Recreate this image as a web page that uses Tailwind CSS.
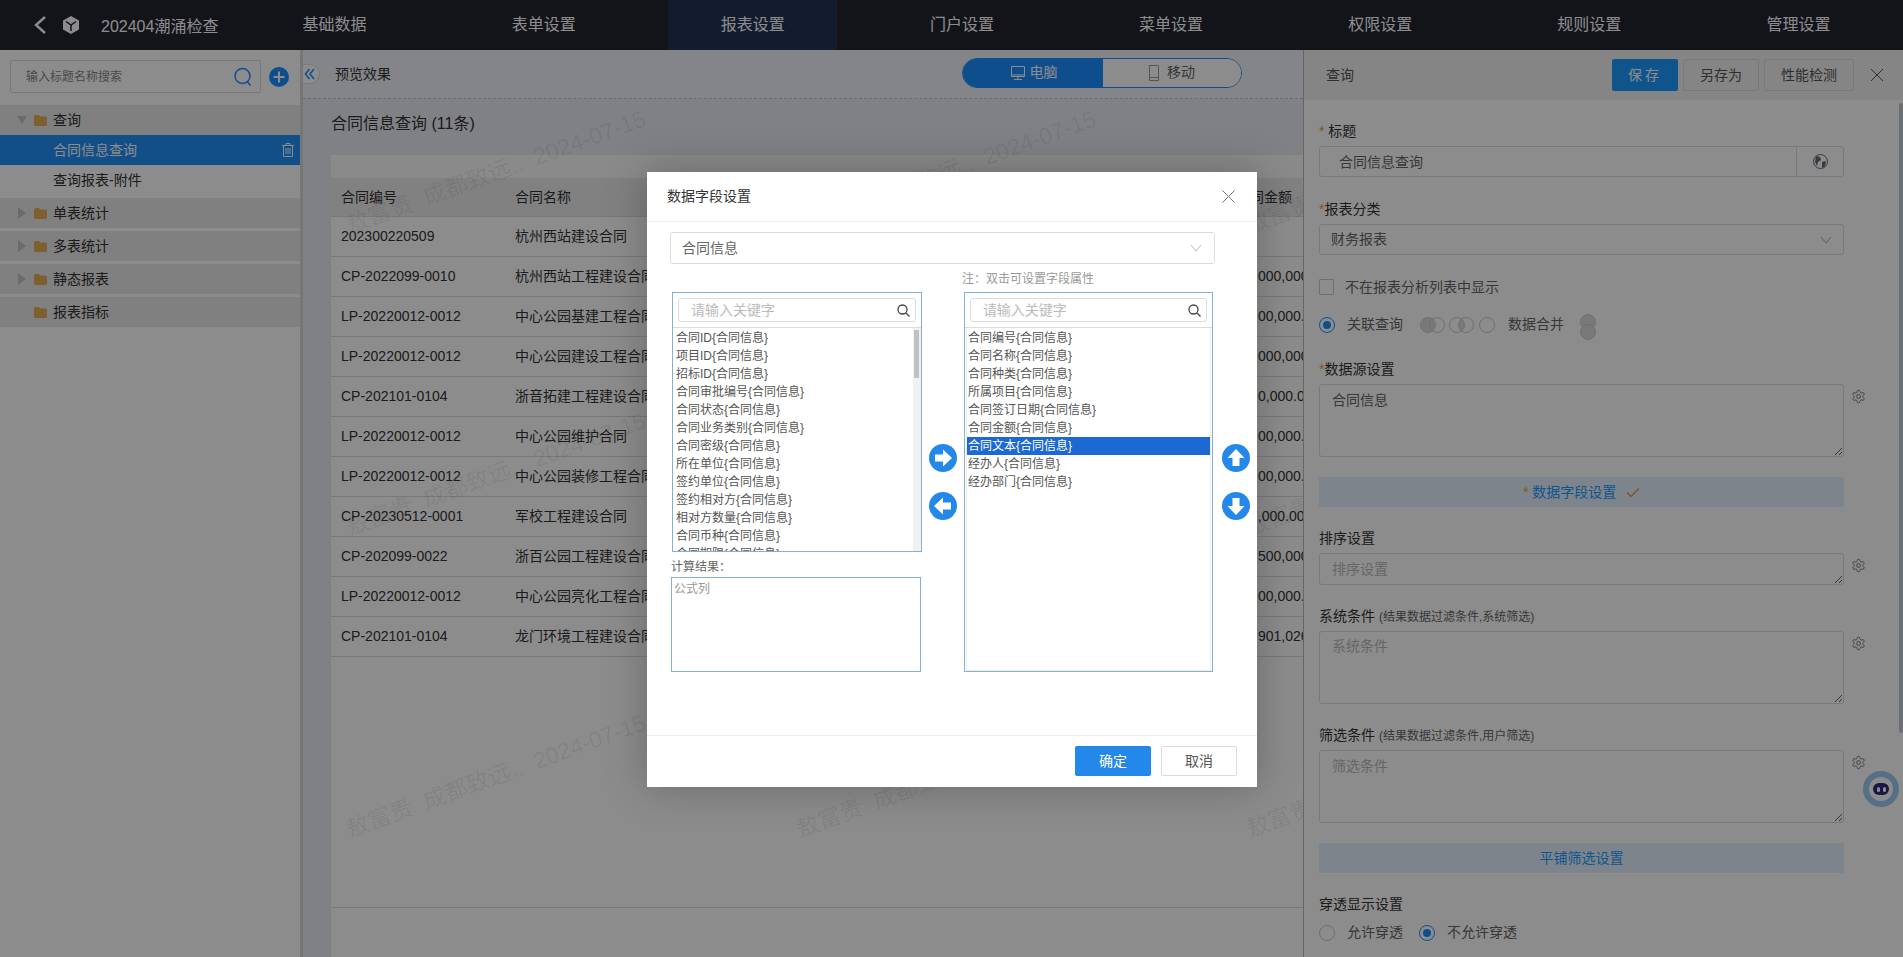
<!DOCTYPE html>
<html lang="zh">
<head>
  <meta charset="UTF-8">
  <script src="https://cdn.jsdelivr.net/npm/@tailwindcss/browser@4"></script>
  <title>报表设置</title>
</head>
<body class="relative w-[1903px] h-[957px] overflow-hidden bg-white text-[14px] text-[#333] font-['Liberation_Sans','Noto_Sans_CJK_SC',sans-serif]">

<!-- Header -->
<div class="h-[50px] flex bg-[#232431] text-white">
  <div class="w-[230px] flex items-center">
    <svg class="ml-[33px] w-[14px] h-[20px]" viewBox="0 0 14 20" fill="none" stroke="#fff" stroke-width="2.4"><path d="M12 2 3 10l9 8"/></svg>
    <svg class="ml-[15px] w-[18px] h-[20px]" viewBox="0 0 18 20"><path d="M9 1 17 5.5v9L9 19 1 14.5v-9z" fill="#fff"/><path d="M4 6.5 9 10l5-3.5M9 10v6" fill="none" stroke="#232431" stroke-width="1.5"/></svg>
    <span class="ml-[21px] text-[16px] mt-[3px] whitespace-nowrap">202404潮涌检查</span>
  </div>
  <nav class="flex-1 grid grid-cols-8 text-[16px] text-center">
    <a class="leading-[50px]">基础数据</a>
    <a class="leading-[50px]">表单设置</a>
    <a class="mx-[20px] leading-[50px] bg-[#233356] border-b-[6px] border-[#1c9cff]">报表设置</a>
    <a class="leading-[50px]">门户设置</a>
    <a class="leading-[50px]">菜单设置</a>
    <a class="leading-[50px]">权限设置</a>
    <a class="leading-[50px]">规则设置</a>
    <a class="leading-[50px]">管理设置</a>
  </nav>
</div>

<div class="h-[907px] flex">

  <!-- Sidebar -->
  <aside class="w-[303px] shrink-0 border-r-[3px] border-[#d8d8d8] bg-white">
    <div class="h-[55px] pl-[10px] pt-[10px] flex items-start">
      <div class="w-[251px] h-[33px] border border-[#ddd] rounded-[2px] flex items-center justify-between pl-[15px] pr-[7px] text-[12px] text-[#888]">
        输入标题名称搜索
        <svg class="w-[20px] h-[20px]" viewBox="0 0 20 20" fill="none" stroke="#1c8fff" stroke-width="1.5"><circle cx="9.5" cy="9" r="7.5"/><path d="m14.5 15 3 3.5"/></svg>
      </div>
      <svg class="ml-[8px] mt-[7px] w-[20px] h-[20px]" viewBox="0 0 20 20"><circle cx="10" cy="10" r="10" fill="#1c8fff"/><path d="M10 4.5v11M4.5 10h11" stroke="#fff" stroke-width="2"/></svg>
    </div>
    <div class="h-[30px] bg-[#e9e9e9] flex items-center">
      <svg class="ml-[17px] w-[10px] h-[8px]" viewBox="0 0 10 8"><path d="M0 0h10L5 8z" fill="#c4c4c4"/></svg>
      <svg class="ml-[7px] w-[13px] h-[11px]" viewBox="0 0 13 11"><path d="M0 1.5q0-1.500 1.500-1.500H5l1 1.500h5.500q1.500 0 1.500 1.500v6.500q0 1.500-1.500 1.500h-10Q0 11 0 9.500z" fill="#e8ae58"/></svg>
      <span class="ml-[6px]">查询</span>
    </div>
    <div class="h-[30px] bg-[#2190f8] text-white flex items-center justify-between pl-[53px] pr-[6px]">
      合同信息查询
      <svg class="w-[12px] h-[14px]" viewBox="0 0 12 14" fill="none" stroke="#fff"><path d="M0 2.5h12M4 2.5V.5h4v2M1.5 2.5v11h9v-11M4 5v6M6 5v6M8 5v6"/></svg>
    </div>
    <div class="h-[30px] pl-[53px] flex items-center">查询报表-附件</div>
    <div class="mt-[3px] h-[30px] bg-[#e9e9e9] flex items-center">
      <svg class="ml-[18px] w-[8px] h-[12px]" viewBox="0 0 8 12"><path d="M0 0v12l8-6z" fill="#c4c4c4"/></svg>
      <svg class="ml-[8px] w-[13px] h-[11px]" viewBox="0 0 13 11"><path d="M0 1.5q0-1.500 1.500-1.500H5l1 1.500h5.500q1.500 0 1.500 1.500v6.500q0 1.500-1.500 1.500h-10Q0 11 0 9.500z" fill="#e8ae58"/></svg>
      <span class="ml-[6px]">单表统计</span>
    </div>
    <div class="mt-[3px] h-[30px] bg-[#e9e9e9] flex items-center">
      <svg class="ml-[18px] w-[8px] h-[12px]" viewBox="0 0 8 12"><path d="M0 0v12l8-6z" fill="#c4c4c4"/></svg>
      <svg class="ml-[8px] w-[13px] h-[11px]" viewBox="0 0 13 11"><path d="M0 1.5q0-1.500 1.500-1.500H5l1 1.500h5.500q1.500 0 1.500 1.500v6.500q0 1.500-1.500 1.500h-10Q0 11 0 9.500z" fill="#e8ae58"/></svg>
      <span class="ml-[6px]">多表统计</span>
    </div>
    <div class="mt-[3px] h-[30px] bg-[#e9e9e9] flex items-center">
      <svg class="ml-[18px] w-[8px] h-[12px]" viewBox="0 0 8 12"><path d="M0 0v12l8-6z" fill="#c4c4c4"/></svg>
      <svg class="ml-[8px] w-[13px] h-[11px]" viewBox="0 0 13 11"><path d="M0 1.5q0-1.500 1.500-1.500H5l1 1.500h5.500q1.500 0 1.500 1.500v6.500q0 1.500-1.500 1.500h-10Q0 11 0 9.500z" fill="#e8ae58"/></svg>
      <span class="ml-[6px]">静态报表</span>
    </div>
    <div class="mt-[3px] h-[30px] bg-[#e9e9e9] flex items-center">
      <svg class="ml-[34px] w-[13px] h-[11px]" viewBox="0 0 13 11"><path d="M0 1.5q0-1.500 1.500-1.500H5l1 1.500h5.500q1.500 0 1.500 1.500v6.500q0 1.500-1.500 1.500h-10Q0 11 0 9.500z" fill="#e8ae58"/></svg>
      <span class="ml-[6px]">报表指标</span>
    </div>
  </aside>

  <!-- Preview -->
  <main class="relative w-[1000px] shrink-0 overflow-hidden bg-[#e7ecf3]">
    <div class="h-[49px] flex items-center bg-[#f1f3f7] border-b border-dashed border-[#c4c4c4]">
      <div class="w-[20px] h-[20px] -ml-[3px] rounded-r-full bg-white border border-l-0 border-[#ddd] flex items-center justify-center">
        <svg class="w-[12px] h-[12px]" viewBox="0 0 12 12" fill="none" stroke="#1c8fff" stroke-width="1.5"><path d="M5.500 1 1.500 6l4 5M10 1 6 6l4 5"/></svg>
      </div>
      <span class="ml-[15px]">预览效果</span>
      <div class="ml-[571px] mb-[3px] w-[280px] h-[30px] rounded-full overflow-hidden border border-[#1c8fff] flex">
        <div class="w-[140px] bg-[#1c8fff] text-white flex items-center justify-center gap-[5px] pl-[2px]">
          <svg class="w-[14px] h-[16px]" viewBox="0 0 14 16" fill="none" stroke="#fff"><path d="M.5 1.5h13v10H.5zM.5 10h13M7 11.5V14M3 14.5h8"/></svg>
          电脑
        </div>
        <div class="flex-1 bg-white flex items-center justify-center gap-[8px] text-[#666]">
          <svg class="w-[10px] h-[16px]" viewBox="0 0 10 16" fill="none" stroke="#999"><path d="M.5.5h9v15h-9zM.5 12.5h9"/></svg>
          移动
        </div>
      </div>
    </div>
    <h2 class="h-[50px] pl-[28px] flex items-center text-[16px] font-normal">合同信息查询 (11条)</h2>
    <div class="ml-[28px] mt-[6px] h-[802px] bg-white">
      <div class="h-[23px] bg-[#fbfbfb]"></div>
      <div class="h-[39px] flex items-center bg-[#ebebeb] border-b border-[#ddd]">
        <span class="w-[184px] pl-[10px]">合同编号</span><span class="w-[721px]">合同名称</span><span class="w-[67px] whitespace-nowrap overflow-hidden">合同金额</span>
      </div>
      <div class="h-[40px] flex items-center border-b border-[#ddd] whitespace-nowrap"><span class="w-[184px] pl-[10px]">202300220509</span><span class="w-[715px]">杭州西站建设合同</span><span class="w-[73px] pl-[28px] overflow-hidden"></span></div>
      <div class="h-[40px] flex items-center border-b border-[#ddd] whitespace-nowrap"><span class="w-[184px] pl-[10px]">CP-2022099-0010</span><span class="w-[715px]">杭州西站工程建设合同</span><span class="w-[73px] pl-[28px] overflow-hidden">000,000</span></div>
      <div class="h-[40px] flex items-center border-b border-[#ddd] whitespace-nowrap"><span class="w-[184px] pl-[10px]">LP-20220012-0012</span><span class="w-[715px]">中心公园基建工程合同</span><span class="w-[73px] pl-[28px] overflow-hidden">00,000.00</span></div>
      <div class="h-[40px] flex items-center border-b border-[#ddd] whitespace-nowrap"><span class="w-[184px] pl-[10px]">LP-20220012-0012</span><span class="w-[715px]">中心公园建设工程合同</span><span class="w-[73px] pl-[28px] overflow-hidden">000,000</span></div>
      <div class="h-[40px] flex items-center border-b border-[#ddd] whitespace-nowrap"><span class="w-[184px] pl-[10px]">CP-202101-0104</span><span class="w-[715px]">浙音拓建工程建设合同</span><span class="w-[73px] pl-[28px] overflow-hidden">0,000.00</span></div>
      <div class="h-[40px] flex items-center border-b border-[#ddd] whitespace-nowrap"><span class="w-[184px] pl-[10px]">LP-20220012-0012</span><span class="w-[715px]">中心公园维护合同</span><span class="w-[73px] pl-[28px] overflow-hidden">00,000.00</span></div>
      <div class="h-[40px] flex items-center border-b border-[#ddd] whitespace-nowrap"><span class="w-[184px] pl-[10px]">LP-20220012-0012</span><span class="w-[715px]">中心公园装修工程合同</span><span class="w-[73px] pl-[28px] overflow-hidden">00,000.00</span></div>
      <div class="h-[40px] flex items-center border-b border-[#ddd] whitespace-nowrap"><span class="w-[184px] pl-[10px]">CP-20230512-0001</span><span class="w-[715px]">军校工程建设合同</span><span class="w-[73px] pl-[20px] overflow-hidden">7,000.00</span></div>
      <div class="h-[40px] flex items-center border-b border-[#ddd] whitespace-nowrap"><span class="w-[184px] pl-[10px]">CP-202099-0022</span><span class="w-[715px]">浙百公园工程建设合同</span><span class="w-[73px] pl-[28px] overflow-hidden">500,000</span></div>
      <div class="h-[40px] flex items-center border-b border-[#ddd] whitespace-nowrap"><span class="w-[184px] pl-[10px]">LP-20220012-0012</span><span class="w-[715px]">中心公园亮化工程合同</span><span class="w-[73px] pl-[28px] overflow-hidden">00,000.00</span></div>
      <div class="h-[40px] flex items-center border-b border-[#ddd] whitespace-nowrap"><span class="w-[184px] pl-[10px]">CP-202101-0104</span><span class="w-[715px]">龙门环境工程建设合同</span><span class="w-[73px] pl-[28px] overflow-hidden">901,026</span></div>
      <div class="h-[251px] border-b border-[#ddd]"></div>
    </div>

    <!-- Watermarks -->
    <span class="absolute left-[44px] top-[159px] origin-left -rotate-[20deg] whitespace-pre text-[23px] text-black/[0.08] pointer-events-none">敖富贵  成都致远..  2024-07-15</span>
    <span class="absolute left-[494px] top-[159px] origin-left -rotate-[20deg] whitespace-pre text-[23px] text-black/[0.08] pointer-events-none">敖富贵  成都致远..  2024-07-15</span>
    <span class="absolute left-[944px] top-[159px] origin-left -rotate-[20deg] whitespace-pre text-[23px] text-black/[0.08] pointer-events-none">敖富贵  成都致远..  2024-07-15</span>
    <span class="absolute left-[44px] top-[461px] origin-left -rotate-[20deg] whitespace-pre text-[23px] text-black/[0.08] pointer-events-none">敖富贵  成都致远..  2024-07-15</span>
    <span class="absolute left-[494px] top-[461px] origin-left -rotate-[20deg] whitespace-pre text-[23px] text-black/[0.08] pointer-events-none">敖富贵  成都致远..  2024-07-15</span>
    <span class="absolute left-[944px] top-[461px] origin-left -rotate-[20deg] whitespace-pre text-[23px] text-black/[0.08] pointer-events-none">敖富贵  成都致远..  2024-07-15</span>
    <span class="absolute left-[44px] top-[763px] origin-left -rotate-[20deg] whitespace-pre text-[23px] text-black/[0.08] pointer-events-none">敖富贵  成都致远..  2024-07-15</span>
    <span class="absolute left-[494px] top-[763px] origin-left -rotate-[20deg] whitespace-pre text-[23px] text-black/[0.08] pointer-events-none">敖富贵  成都致远..  2024-07-15</span>
    <span class="absolute left-[944px] top-[763px] origin-left -rotate-[20deg] whitespace-pre text-[23px] text-black/[0.08] pointer-events-none">敖富贵  成都致远..  2024-07-15</span>
  </main>

  <!-- Settings panel -->
  <section class="flex-1 border-l border-[#bbb] bg-white relative">
    <div class="h-[50px] bg-[#f3f3f3] flex items-center pl-[22px]">
      <span class="mr-[258px] text-[#555]">查询</span>
      <button class="w-[66px] h-[32px] bg-[#1c9cff] text-white rounded-[2px] tracking-[3px]">保存</button>
      <button class="ml-[5px] w-[76px] h-[32px] border border-[#ddd] rounded-[2px] text-[#555]">另存为</button>
      <button class="ml-[5px] w-[90px] h-[32px] border border-[#ddd] rounded-[2px] text-[#555]">性能检测</button>
      <svg class="ml-[16px] w-[14px] h-[14px]" viewBox="0 0 14 14" stroke="#555"><path d="M1 1l12 12M13 1 1 13"/></svg>
    </div>
    <div class="pl-[15px] pt-[20px]">
      <label class="block h-[22px] leading-[22px]"><span class="text-[#e8a33d]">*</span> 标题</label>
      <div class="mt-[4px] w-[525px] h-[31px] border border-[#ddd] rounded-[3px] flex">
        <span class="flex-1 pl-[19px] leading-[31px] text-[#666]">合同信息查询</span>
        <span class="w-[47px] border-l border-[#ddd] flex items-center justify-center">
          <svg class="w-[15px] h-[15px]" viewBox="0 0 15 15"><circle cx="7.5" cy="7.5" r="7" fill="#fff" stroke="#667"/><path d="M3 2l4 1 1 3-3 2-1 4-2-4zM9 8l4-1-1 5-3 2z" fill="#667"/></svg>
        </span>
      </div>

      <label class="block mt-[21px] h-[22px] leading-[22px]"><span class="text-[#e8a33d]">*</span>报表分类</label>
      <div class="mt-[4px] w-[525px] h-[31px] border border-[#ddd] rounded-[3px] flex items-center justify-between pl-[11px] pr-[11px] text-[#666]">
        财务报表
        <svg class="w-[12px] h-[8px]" viewBox="0 0 12 8" fill="none" stroke="#aaa"><path d="m1 1 5 6 5-6"/></svg>
      </div>

      <div class="mt-[24px] h-[16px] flex items-center text-[#666]">
        <span class="w-[15px] h-[16px] border border-[#ccc] rounded-[1px]"></span>
        <span class="ml-[11px]">不在报表分析列表中显示</span>
      </div>

      <div class="mt-[22px] h-[16px] flex items-center text-[#666]">
        <span class="w-[16px] h-[16px] rounded-full border border-[#1c8fff] flex items-center justify-center"><span class="w-[8px] h-[8px] rounded-full bg-[#1c8fff]"></span></span>
        <span class="ml-[12px] -mt-[2px]">关联查询</span>
        <svg class="ml-[17px] w-[76px] h-[18px]" viewBox="0 0 76 18" fill="none" stroke="#ccc"><circle cx="8" cy="9" r="7.5" fill="#ddd"/><circle cx="17" cy="9" r="7.5"/><path d="M41.5 3a7.5 7.500 0 0 1 0 12 7.500 7.500 0 0 1 0-12z" fill="#ddd" stroke="none"/><circle cx="37" cy="9" r="7.5"/><circle cx="46" cy="9" r="7.5"/><circle cx="67" cy="9" r="7.5"/></svg>
        <span class="ml-[12px] -mt-[2px]">数据合并</span>
        <svg class="ml-[16px] w-[16px] h-[28px] mt-[4px]" viewBox="0 0 16 28" fill="#ddd" stroke="#ccc"><circle cx="8" cy="9" r="7.5"/><circle cx="8" cy="19" r="7.5"/></svg>
      </div>

      <label class="block mt-[25px] h-[22px] leading-[22px]"><span class="text-[#e8a33d]">*</span>数据源设置</label>
      <div class="mt-[4px] flex items-start">
        <textarea class="w-[525px] h-[73px] border border-[#ddd] rounded-[3px] px-[12px] pt-[5px] leading-[20px] text-[#666] block" readonly>合同信息</textarea>
        <svg class="ml-[7px] mt-[5px] w-[15px] h-[15px]" viewBox="0 0 24 24" fill="none" stroke="#777" stroke-width="1.6"><path d="M12.22 2h-.44a2 2 0 0 0-2 2v.18a2 2 0 0 1-1 1.73l-.43.25a2 2 0 0 1-2 0l-.15-.08a2 2 0 0 0-2.73.73l-.22.38a2 2 0 0 0 .73 2.73l.15.1a2 2 0 0 1 1 1.72v.51a2 2 0 0 1-1 1.74l-.15.09a2 2 0 0 0-.73 2.73l.22.38a2 2 0 0 0 2.73.73l.15-.08a2 2 0 0 1 2 0l.43.25a2 2 0 0 1 1 1.73V20a2 2 0 0 0 2 2h.44a2 2 0 0 0 2-2v-.18a2 2 0 0 1 1-1.73l.43-.25a2 2 0 0 1 2 0l.15.08a2 2 0 0 0 2.73-.73l.22-.39a2 2 0 0 0-.73-2.73l-.15-.08a2 2 0 0 1-1-1.74v-.5a2 2 0 0 1 1-1.74l.15-.09a2 2 0 0 0 .73-2.73l-.22-.38a2 2 0 0 0-2.73-.73l-.15.08a2 2 0 0 1-2 0l-.43-.25a2 2 0 0 1-1-1.73V4a2 2 0 0 0-2-2z"/><circle cx="12" cy="12" r="3"/></svg>
      </div>

      <button class="block mt-[20px] w-[525px] h-[30px] bg-[#e5f1fd] text-[#1c9cff] text-center">
        <span class="text-[#e8a33d]">*</span> 数据字段设置
        <svg class="inline ml-[6px] w-[14px] h-[10px]" viewBox="0 0 14 10" fill="none" stroke="#e8a33d" stroke-width="1.5"><path d="m1 4.500 4 4 8-8"/></svg>
      </button>

      <label class="block mt-[20px] h-[22px] leading-[22px]">排序设置</label>
      <div class="mt-[4px] flex items-start">
        <textarea class="w-[525px] h-[32px] border border-[#ddd] rounded-[3px] px-[12px] pt-[5px] leading-[20px] placeholder-[#bbb] block" placeholder="排序设置"></textarea>
        <svg class="ml-[7px] mt-[5px] w-[15px] h-[15px]" viewBox="0 0 24 24" fill="none" stroke="#777" stroke-width="1.6"><path d="M12.22 2h-.44a2 2 0 0 0-2 2v.18a2 2 0 0 1-1 1.73l-.43.25a2 2 0 0 1-2 0l-.15-.08a2 2 0 0 0-2.73.73l-.22.38a2 2 0 0 0 .73 2.73l.15.1a2 2 0 0 1 1 1.72v.51a2 2 0 0 1-1 1.74l-.15.09a2 2 0 0 0-.73 2.73l.22.38a2 2 0 0 0 2.73.73l.15-.08a2 2 0 0 1 2 0l.43.25a2 2 0 0 1 1 1.73V20a2 2 0 0 0 2 2h.44a2 2 0 0 0 2-2v-.18a2 2 0 0 1 1-1.73l.43-.25a2 2 0 0 1 2 0l.15.08a2 2 0 0 0 2.73-.73l.22-.39a2 2 0 0 0-.73-2.73l-.15-.08a2 2 0 0 1-1-1.74v-.5a2 2 0 0 1 1-1.74l.15-.09a2 2 0 0 0 .73-2.73l-.22-.38a2 2 0 0 0-2.73-.73l-.15.08a2 2 0 0 1-2 0l-.43-.25a2 2 0 0 1-1-1.73V4a2 2 0 0 0-2-2z"/><circle cx="12" cy="12" r="3"/></svg>
      </div>

      <label class="block mt-[20px] h-[22px] leading-[22px]">系统条件 <span class="text-[12px] text-[#666]">(结果数据过滤条件,系统筛选)</span></label>
      <div class="mt-[4px] flex items-start">
        <textarea class="w-[525px] h-[73px] border border-[#ddd] rounded-[3px] px-[12px] pt-[4px] leading-[20px] placeholder-[#bbb] block" placeholder="系统条件"></textarea>
        <svg class="ml-[7px] mt-[5px] w-[15px] h-[15px]" viewBox="0 0 24 24" fill="none" stroke="#777" stroke-width="1.6"><path d="M12.22 2h-.44a2 2 0 0 0-2 2v.18a2 2 0 0 1-1 1.73l-.43.25a2 2 0 0 1-2 0l-.15-.08a2 2 0 0 0-2.73.73l-.22.38a2 2 0 0 0 .73 2.73l.15.1a2 2 0 0 1 1 1.72v.51a2 2 0 0 1-1 1.74l-.15.09a2 2 0 0 0-.73 2.73l.22.38a2 2 0 0 0 2.73.73l.15-.08a2 2 0 0 1 2 0l.43.25a2 2 0 0 1 1 1.73V20a2 2 0 0 0 2 2h.44a2 2 0 0 0 2-2v-.18a2 2 0 0 1 1-1.73l.43-.25a2 2 0 0 1 2 0l.15.08a2 2 0 0 0 2.73-.73l.22-.39a2 2 0 0 0-.73-2.73l-.15-.08a2 2 0 0 1-1-1.74v-.5a2 2 0 0 1 1-1.74l.15-.09a2 2 0 0 0 .73-2.73l-.22-.38a2 2 0 0 0-2.73-.73l-.15.08a2 2 0 0 1-2 0l-.43-.25a2 2 0 0 1-1-1.73V4a2 2 0 0 0-2-2z"/><circle cx="12" cy="12" r="3"/></svg>
      </div>

      <label class="block mt-[20px] h-[22px] leading-[22px]">筛选条件 <span class="text-[12px] text-[#666]">(结果数据过滤条件,用户筛选)</span></label>
      <div class="mt-[4px] flex items-start">
        <textarea class="w-[525px] h-[73px] border border-[#ddd] rounded-[3px] px-[12px] pt-[5px] leading-[20px] placeholder-[#bbb] block" placeholder="筛选条件"></textarea>
        <svg class="ml-[7px] mt-[5px] w-[15px] h-[15px]" viewBox="0 0 24 24" fill="none" stroke="#777" stroke-width="1.6"><path d="M12.22 2h-.44a2 2 0 0 0-2 2v.18a2 2 0 0 1-1 1.73l-.43.25a2 2 0 0 1-2 0l-.15-.08a2 2 0 0 0-2.73.73l-.22.38a2 2 0 0 0 .73 2.73l.15.1a2 2 0 0 1 1 1.72v.51a2 2 0 0 1-1 1.74l-.15.09a2 2 0 0 0-.73 2.73l.22.38a2 2 0 0 0 2.73.73l.15-.08a2 2 0 0 1 2 0l.43.25a2 2 0 0 1 1 1.73V20a2 2 0 0 0 2 2h.44a2 2 0 0 0 2-2v-.18a2 2 0 0 1 1-1.73l.43-.25a2 2 0 0 1 2 0l.15.08a2 2 0 0 0 2.73-.73l.22-.39a2 2 0 0 0-.73-2.73l-.15-.08a2 2 0 0 1-1-1.74v-.5a2 2 0 0 1 1-1.74l.15-.09a2 2 0 0 0 .73-2.73l-.22-.38a2 2 0 0 0-2.73-.73l-.15.08a2 2 0 0 1-2 0l-.43-.25a2 2 0 0 1-1-1.73V4a2 2 0 0 0-2-2z"/><circle cx="12" cy="12" r="3"/></svg>
      </div>

      <button class="block mt-[20px] w-[525px] h-[30px] bg-[#e5f1fd] text-[#1c9cff] text-center">平铺筛选设置</button>

      <label class="block mt-[20px] h-[22px] leading-[22px]">穿透显示设置</label>
      <div class="mt-[10px] h-[16px] flex items-center text-[#666]">
        <span class="w-[16px] h-[16px] rounded-full border border-[#ccc]"></span>
        <span class="ml-[12px] -mt-[2px]">允许穿透</span>
        <span class="ml-[16px] w-[16px] h-[16px] rounded-full border border-[#1c8fff] flex items-center justify-center"><span class="w-[8px] h-[8px] rounded-full bg-[#1c8fff]"></span></span>
        <span class="ml-[12px] -mt-[2px]">不允许穿透</span>
      </div>
    </div>
    <!-- scrollbar -->
    <div class="absolute right-0 top-[53px] w-[4px] h-[630px] bg-[#c4c8d0] rounded-full"></div>
    <!-- bot -->
    <div class="absolute right-0 top-[715px] w-[47px] h-[48px] bg-white/70 rounded-l-[24px] flex items-center justify-end pr-[4px]">
      <div class="w-[36px] h-[36px] rounded-full bg-[#9ccbf5] flex items-center justify-center">
        <div class="w-[24px] h-[24px] rounded-full bg-white flex items-center justify-center">
          <div class="w-[16px] h-[12px] rounded-[6px] bg-[#2c2c80] flex items-center justify-center gap-[3px]"><span class="w-[3px] h-[5px] bg-white rounded-full"></span><span class="w-[3px] h-[5px] bg-white rounded-full"></span></div>
        </div>
      </div>
    </div>
  </section>
</div>

<!-- Dim layer -->
<div class="absolute inset-0 bg-black/45"></div>

<!-- Modal -->
<div class="absolute left-[647px] top-[172px] w-[610px] h-[615px] bg-white shadow-[0_0_40px_rgba(0,0,0,0.25)] flex flex-col">
  <div class="h-[50px] shrink-0 border-b border-[#eee] flex items-center justify-between pl-[20px] pr-[22px] text-[#333]">
    数据字段设置
    <svg class="w-[13px] h-[13px]" viewBox="0 0 13 13" stroke="#777"><path d="M.5.5l12 12M12.5.5l-12 12"/></svg>
  </div>
  <div class="flex-1 relative">
    <div class="ml-[23px] mt-[10px] w-[545px] h-[32px] border border-[#ddd] rounded-[3px] flex items-center justify-between pl-[11px] pr-[12px] text-[#666]">
      合同信息
      <svg class="w-[12px] h-[8px]" viewBox="0 0 12 8" fill="none" stroke="#bbb"><path d="m1 1 5 6 5-6"/></svg>
    </div>
    <div class="h-[28px] pl-[315px] pt-[7px] text-[12px] leading-[16px] text-[#999]">注：双击可设置字段属性</div>
    <div class="flex items-start">
      <!-- Left column -->
      <div class="ml-[24px] w-[251px]">
        <div class="ml-[1px] w-[250px] h-[260px] border border-[#85b0d0] flex flex-col">
          <div class="h-[35px] shrink-0 border-b border-[#ddd] pl-[5px] pr-[5px] pt-[5px]">
            <div class="h-[24px] border border-[#ddd] rounded-[3px] flex items-center justify-between pl-[12px] pr-[5px] text-[#bbb]">
              请输入关键字
              <svg class="w-[13px] h-[13px]" viewBox="0 0 13 13" fill="none" stroke="#444" stroke-width="1.3"><circle cx="5.5" cy="5.5" r="4.5"/><path d="m9 9 3.500 3.500"/></svg>
            </div>
          </div>
          <div class="flex-1 flex overflow-hidden">
            <ul class="flex-1 pl-[3px] pt-[1px] text-[12px] leading-[18px] text-[#555] overflow-hidden whitespace-nowrap">
              <li>合同ID{合同信息}</li><li>项目ID{合同信息}</li><li>招标ID{合同信息}</li><li>合同审批编号{合同信息}</li><li>合同状态{合同信息}</li><li>合同业务类别{合同信息}</li><li>合同密级{合同信息}</li><li>所在单位{合同信息}</li><li>签约单位{合同信息}</li><li>签约相对方{合同信息}</li><li>相对方数量{合同信息}</li><li>合同币种{合同信息}</li><li>合同期限{合同信息}</li>
            </ul>
            <div class="w-[8px] bg-[#f1f1f1] pt-[2px]"><div class="w-[5px] ml-[1px] h-[48px] bg-[#c1c1c1]"></div></div>
          </div>
        </div>
        <div class="h-[25px] pt-[3px] leading-[25px] text-[12px] text-[#666]">计算结果：</div>
        <textarea class="block w-[250px] h-[95px] border border-[#85b0d0] px-[2px] py-[2px] text-[12px] leading-[18px] placeholder-[#999] resize-none" placeholder="公式列"></textarea>
      </div>
      <!-- Move buttons -->
      <div class="w-[42px] pt-[152px] pl-[1px] flex flex-col items-center gap-[20px]">
        <svg class="w-[28px] h-[28px]" viewBox="0 0 28 28"><circle cx="14" cy="14" r="14" fill="#2488ea"/><path d="M6 10.500h8V5.500L23 14l-9 8.500v-5H6z" fill="#fff"/></svg>
        <svg class="w-[28px] h-[28px]" viewBox="0 0 28 28"><circle cx="14" cy="14" r="14" fill="#2488ea"/><path d="M22 10.500h-8V5.500L5 14l9 8.500v-5h8z" fill="#fff"/></svg>
      </div>
      <!-- Right column -->
      <div class="w-[250px] h-[380px] border border-[#85b0d0] flex flex-col">
        <div class="h-[35px] shrink-0 border-b border-[#ddd] pl-[5px] pr-[5px] pt-[5px]">
          <div class="h-[24px] border border-[#ddd] rounded-[3px] flex items-center justify-between pl-[12px] pr-[5px] text-[#bbb]">
            请输入关键字
            <svg class="w-[13px] h-[13px]" viewBox="0 0 13 13" fill="none" stroke="#444" stroke-width="1.3"><circle cx="5.5" cy="5.5" r="4.5"/><path d="m9 9 3.500 3.500"/></svg>
          </div>
        </div>
        <ul class="flex-1 mx-[1px] pt-[1px] text-[12px] leading-[18px] text-[#555] whitespace-nowrap border-x border-[#eee] border-b">
          <li class="pl-[1px]">合同编号{合同信息}</li><li class="pl-[1px]">合同名称{合同信息}</li><li class="pl-[1px]">合同种类{合同信息}</li><li class="pl-[1px]">所属项目{合同信息}</li><li class="pl-[1px]">合同签订日期{合同信息}</li><li class="pl-[1px]">合同金额{合同信息}</li><li class="pl-[1px] bg-[#1d69d3] text-white">合同文本{合同信息}</li><li class="pl-[1px]">经办人{合同信息}</li><li class="pl-[1px]">经办部门{合同信息}</li>
        </ul>
      </div>
      <div class="w-[44px] pt-[152px] pl-[1px] flex flex-col items-center gap-[20px]">
        <svg class="w-[28px] h-[28px]" viewBox="0 0 28 28"><circle cx="14" cy="14" r="14" fill="#2488ea"/><path d="M10.500 22v-8H5.500L14 5l8.500 9h-5v8z" fill="#fff"/></svg>
        <svg class="w-[28px] h-[28px]" viewBox="0 0 28 28"><circle cx="14" cy="14" r="14" fill="#2488ea"/><path d="M10.500 6v8H5.500L14 23l8.500-9h-5V6z" fill="#fff"/></svg>
      </div>
    </div>
  </div>
  <div class="h-[52px] shrink-0 border-t border-[#eee] flex justify-end pt-[10px] pr-[20px] gap-[10px]">
    <button class="w-[76px] h-[30px] bg-[#2488ea] text-white rounded-[2px]">确定</button>
    <button class="w-[76px] h-[30px] border border-[#ddd] rounded-[2px] text-[#555]">取消</button>
  </div>
</div>
</body>
</html>
